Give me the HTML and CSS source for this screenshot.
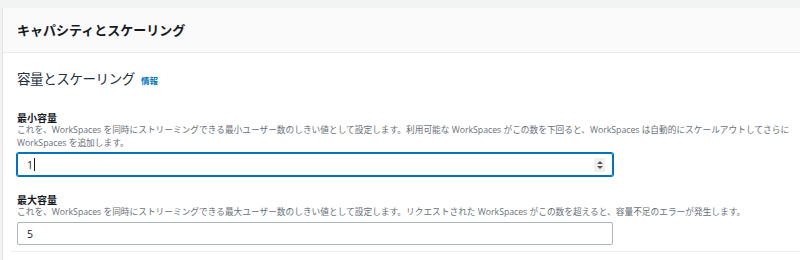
FILE: index.html
```html
<!DOCTYPE html>
<html lang="ja">
<head>
<meta charset="UTF-8">
<title>キャパシティとスケーリング</title>
<link rel="stylesheet" href="styles.css">
</head>
<body>
	<div class="card">
		<div class="card-header">
			<h2>キャパシティとスケーリング</h2>
		</div>
		<div class="card-body">
			<h3 class="section-title">容量とスケーリング <a href="#" class="info">情報</a></h3>

			<div class="field">
				<label class="label">最小容量</label>
				<p class="desc">これを、WorkSpaces を同時にストリーミングできる最小ユーザー数のしきい値として設定します。利用可能な WorkSpaces がこの数を下回ると、WorkSpaces は自動的にスケールアウトしてさらに WorkSpaces を追加します。</p>
				<div class="input focus">
					<span class="value">1</span><span class="caret"></span>
					<span class="spin">
						<svg width="8" height="10" viewBox="0 0 8 10"><path d="M4 1 L7 4 L1 4 Z M4 9 L7 6 L1 6 Z" fill="#555"/></svg>
					</span>
				</div>
			</div>

			<div class="field">
				<label class="label">最大容量</label>
				<p class="desc">これを、WorkSpaces を同時にストリーミングできる最大ユーザー数のしきい値として設定します。リクエストされた WorkSpaces がこの数を超えると、容量不足のエラーが発生します。</p>
				<div class="input">
					<span class="value">5</span>
				</div>
			</div>
		</div>
		<div class="card-foot"></div>
	</div>
</body>
</html>
```

FILE: styles.css
```css
*{margin:0;padding:0;box-sizing:border-box;}
html,body{height:100%;}
body{
	background:#f2f3f3;
	padding:8px 0 0 2px;
	font-family:"Open Sans","Noto Sans CJK JP",sans-serif;
	color:#16191f;
}
.card{
	background:#fff;
	border-left:1px solid #dfe3e3;
	height:100%;
}
.card-header{
	height:45px;
	background:#fafafa;
	border-bottom:1px solid #eaeded;
	display:flex;
	align-items:center;
	padding:0 14px 2px;
}
.card-header h2{
	font-size:13px;
	font-weight:bold;
	color:#16191f;
}
.card-body{
	padding:15px 4px 0 14px;
}
.section-title{
	font-size:13.5px;
	letter-spacing:-0.4px;
	font-weight:normal;
	color:#232f3e;
	display:flex;
	align-items:baseline;
	gap:6px;
}
.info{
	font-size:8.5px;
	letter-spacing:0;
	font-weight:bold;
	color:#0073bb;
	text-decoration:none;
}
.field{margin-top:24px;}
.field + .field{margin-top:18px;}
.label{
	display:block;
	font-size:10px;
	font-weight:bold;
	line-height:12px;
	color:#16191f;
}
.desc{
	font-size:8.7px;
	line-height:13px;
	color:#687078;
}
.input{
	width:596px;
	height:23px;
	margin-top:3px;
	border:1px solid #aab7b8;
	border-radius:2px;
	display:flex;
	align-items:center;
	padding:0 9px;
	font-size:10.5px;
	color:#16191f;
}
.input.focus{
	border-color:#0073bb;
	box-shadow:0 0 0 1px #0073bb;
}
.caret{
	width:1px;
	height:13px;
	background:#16191f;
	margin-left:1px;
}
.spin{
	margin-left:auto;
	margin-right:-2px;
	width:11px;
	height:14px;
	background:#f0f0f0;
	display:flex;
	align-items:center;
	justify-content:center;
}
.card-foot{
	margin:6px 0 0 8px;
	border-top:1px solid #eaeded;
}
```
